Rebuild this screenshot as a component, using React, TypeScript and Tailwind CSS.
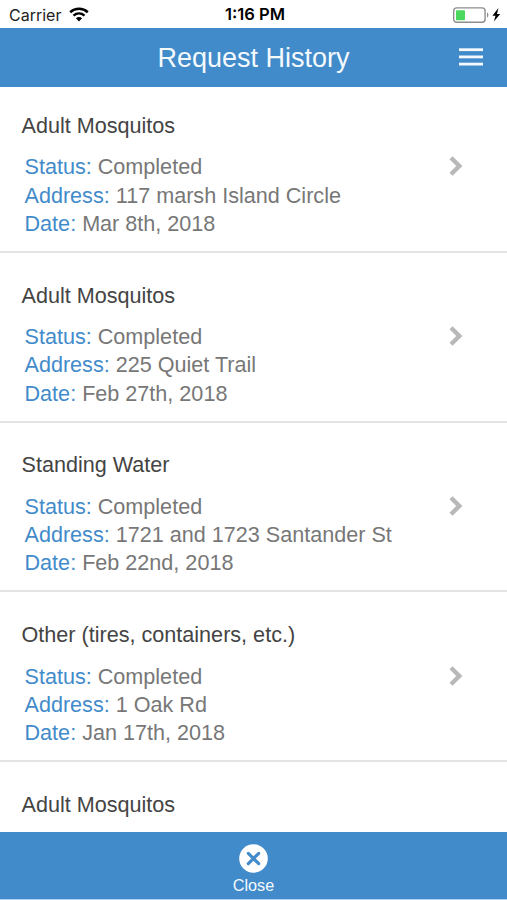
interface ServiceRequest {
  id: number;
  type: string;
  status: string;
  address: string;
  date: string;
}

const REQUESTS: ServiceRequest[] = [
  {
    id: 1,
    type: "Adult Mosquitos",
    status: "Completed",
    address: "117 marsh Island Circle",
    date: "Mar 8th, 2018",
  },
  {
    id: 2,
    type: "Adult Mosquitos",
    status: "Completed",
    address: "225 Quiet Trail",
    date: "Feb 27th, 2018",
  },
  {
    id: 3,
    type: "Standing Water",
    status: "Completed",
    address: "1721 and 1723 Santander St",
    date: "Feb 22nd, 2018",
  },
  {
    id: 4,
    type: "Other (tires, containers, etc.)",
    status: "Completed",
    address: "1 Oak Rd",
    date: "Jan 17th, 2018",
  },
];

const WifiIcon = () => (
  <svg width="20" height="15" viewBox="0 0 20 15" fill="none" stroke="#000">
    <path d="M1.2 5.2C6.2 .7 13.8 .7 18.8 5.2" strokeWidth="2.5" />
    <path d="M4.5 8.6C7.8 5.8 12.2 5.8 15.5 8.6" strokeWidth="2.5" />
    <path d="M10 14.4L6.9 11.3C8.7 9.7 11.3 9.7 13.1 11.3Z" fill="#000" stroke="none" />
  </svg>
);

const BatteryIcon = () => (
  <svg width="48" height="18" viewBox="0 0 48 18" fill="none">
    <rect x=".7" y="1.9" width="31.4" height="14.4" rx="3" stroke="#8e8e8e" strokeWidth="1.4" />
    <rect x="3" y="4.2" width="9" height="10" rx=".8" fill="#4cd75f" />
    <path d="M34 6.5C35.9 7.1 35.9 10.9 34 11.5Z" fill="#8e8e8e" />
    <path d="M45.4 2L39.4 9.7H42.5L40.9 15.4L47.2 7.9H44Z" fill="#000" />
  </svg>
);

const MenuIcon = () => (
  <svg width="24" height="18" viewBox="0 0 24 18" fill="#f4f9fd">
    <rect y=".3" width="24" height="2.8" />
    <rect y="7.5" width="24" height="2.8" />
    <rect y="14.7" width="24" height="2.8" />
  </svg>
);

const ChevronIcon = () => (
  <svg
    width="14"
    height="20"
    viewBox="0 0 14 20"
    fill="none"
    stroke="#b8b8b8"
    strokeWidth="4.4"
  >
    <path d="M2 1.8L10.3 10L2 18.2" />
  </svg>
);

const CloseIcon = () => (
  <svg width="29" height="29" viewBox="0 0 29 29" fill="none">
    <circle cx="14.5" cy="14.5" r="14.3" fill="#fff" />
    <path
      d="M9.3 9.3L19.7 19.7M19.7 9.3L9.3 19.7"
      stroke="#428bca"
      strokeWidth="3.1"
      strokeLinecap="round"
    />
  </svg>
);

const Field = ({ label, value }: { label: string; value: string }) => (
  <p className="whitespace-nowrap">
    <span className="text-[#428bca]">{label}:</span> {value}
  </p>
);

const RequestRow = ({ request }: { request: ServiceRequest }) => (
  <li className="h-[169.75px] shrink-0 flex flex-col border-b-2 border-[#e4e4e4] pt-[28.75px] pl-[21.5px]">
    <h2 className="text-[21.6px] leading-[28px] text-[#444]">{request.type}</h2>
    <div className="flex justify-between pt-[13.5px] pl-[3px] pr-[44px]">
      <div className="text-[21.6px] leading-[28.3px] text-[#777]">
        <Field label="Status" value={request.status} />
        <Field label="Address" value={request.address} />
        <Field label="Date" value={request.date} />
      </div>
      <div className="pt-[3px]">
        <ChevronIcon />
      </div>
    </div>
  </li>
);

export default function App() {
  return (
    <div className="h-[900px] w-[507px] flex flex-col overflow-hidden bg-white font-['Liberation_Sans',Arial,sans-serif]">
      <div className="h-7 shrink-0 grid grid-cols-3 items-center pl-[9px] pr-[6px] pt-px font-['Inter',sans-serif] text-[16px] text-[#222]">
        <div className="flex items-center gap-2">
          <span>Carrier</span>
          <WifiIcon />
        </div>
        <span className="text-center text-[16.6px] font-semibold text-black">1:16 PM</span>
        <div className="flex justify-end">
          <BatteryIcon />
        </div>
      </div>

      <header className="h-[59px] shrink-0 grid grid-cols-[1fr_auto_1fr] items-center bg-[#428bca] px-6">
        <span />
        <h1 className="text-[27px] leading-[32px] text-[#f4f9fd]">Request History</h1>
        <button className="justify-self-end pb-[2px]" aria-label="Menu">
          <MenuIcon />
        </button>
      </header>

      <ul className="flex-1 min-h-0 flex flex-col overflow-hidden -mt-1">
        {REQUESTS.map((request) => (
          <RequestRow key={request.id} request={request} />
        ))}
        <li className="shrink-0 pt-[28.75px] pl-[21.5px] text-[21.6px] leading-[28px] text-[#444]">
          Adult Mosquitos
        </li>
      </ul>

      <footer className="h-[68px] shrink-0 flex flex-col items-center bg-[#428bca] border-b border-[#b5d3ec] pt-3">
        <CloseIcon />
        <span className="mt-[2px] text-[16.2px] leading-[20px] text-[#f4f9fd]">Close</span>
      </footer>
    </div>
  );
}
